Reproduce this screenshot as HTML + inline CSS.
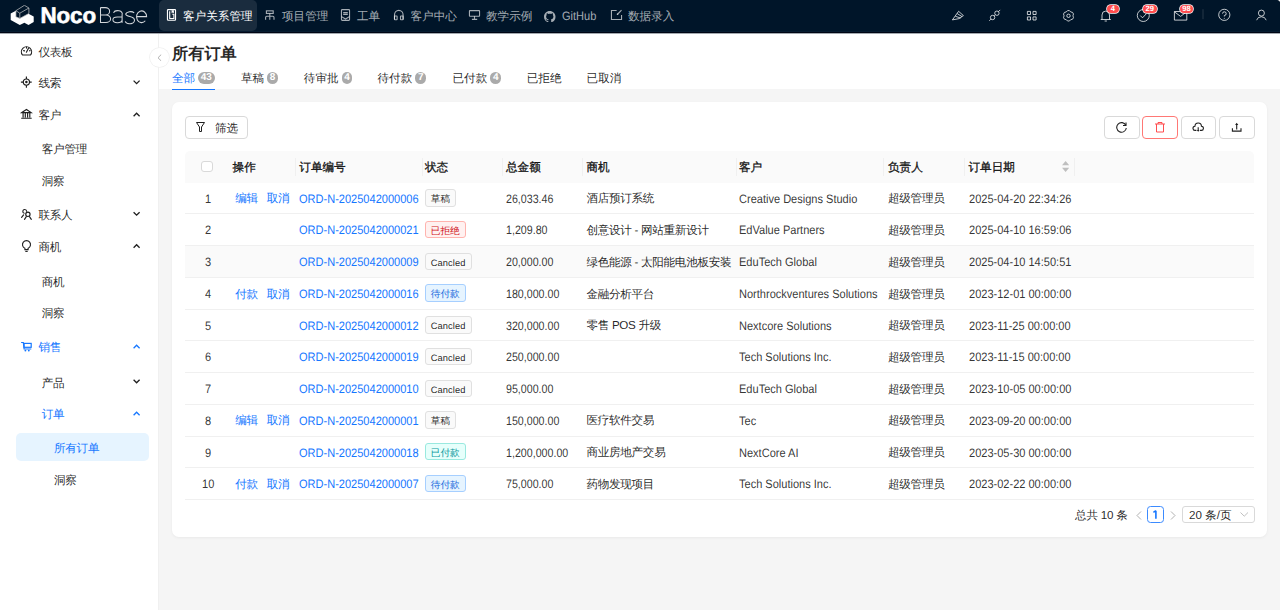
<!DOCTYPE html>
<html><head><meta charset="utf-8">
<style>
*{box-sizing:border-box;margin:0;padding:0}
html,body{width:1280px;height:610px;overflow:hidden}
body{text-rendering:geometricPrecision;font-family:"Liberation Sans",sans-serif;background:#f5f5f5;color:rgba(0,0,0,0.86);position:relative;font-size:11.6px}
.a{position:absolute;white-space:nowrap}
svg{display:block}
#hdr{position:absolute;left:0;top:0;width:1280px;height:33px;background:#001529}
.nav{position:absolute;top:0;height:33px;color:rgba(255,255,255,0.65);font-size:11.6px;line-height:33px}
.nav svg{position:absolute;top:11px}
#side{position:absolute;left:0;top:33px;width:159px;height:577px;background:#fff;border-right:1px solid #f0f0f0}
.mi{position:absolute;left:0;width:159px;height:20px;line-height:20px;font-size:11.6px;letter-spacing:-0.3px}
.mi svg.ic{position:absolute;left:21px;top:4px}
.mi .chev{position:absolute;left:133px;top:7px}
#phead{position:absolute;left:159px;top:33px;width:1121px;height:55.9px;background:#fff}
#card{position:absolute;left:172px;top:102.4px;width:1095px;height:434.5px;background:#fff;border-radius:7px;box-shadow:0 1px 3px rgba(0,0,0,0.05)}
.btn{position:absolute;top:116px;height:22.5px;width:35.5px;border:1px solid #d9d9d9;border-radius:4px;background:#fff}
.btn svg{position:absolute;left:11px;top:5px}
#thead{position:absolute;left:185px;top:151px;width:1069px;height:32px;background:#fafafa;border-radius:5px 5px 0 0}
.th{position:absolute;top:152px;height:32px;line-height:32px;font-weight:normal;-webkit-text-stroke:0.35px rgba(0,0,0,0.88);font-size:11.6px}
.dv{position:absolute;top:157.5px;width:1px;height:18px;background:#f0f0f0}
.row{position:absolute;left:185px;width:1069px;height:31.73px;border-bottom:1px solid #f0f0f0}
.td{position:absolute;height:31.73px;line-height:31.73px;font-size:11.6px;margin-top:0.7px;letter-spacing:-0.3px}
.lt{color:rgba(0,0,0,0.8);font-size:12.2px;transform:scaleX(0.905);transform-origin:0 0;margin-top:1px;letter-spacing:0}
.num{transform:scaleX(0.875)}
.lnk,.lnk.lt{color:#1677ff}
.tag{position:absolute;left:424.7px;height:17.4px;line-height:19px;font-size:9.7px;padding:0 5px;border:1px solid #e0e0e0;background:#fafafa;border-radius:3px;color:rgba(0,0,0,0.88)}
.t-red{background:#fff1f0;border-color:#ffb3ae;color:#cf1322}
.t-blue{background:#e6f4ff;border-color:#a6cfff;color:#1668dc}
.t-cyan{background:#e6fffb;border-color:#99e9df;color:#08979c}
.tab{position:absolute;top:70.1px;height:17px;line-height:17px;font-size:11.6px}
.bdg{display:inline-block;vertical-align:top;margin-top:2.4px;margin-left:3px;height:11.5px;min-width:10.8px;border-radius:6px;background:#aaa;color:#fff;font-size:10px;font-weight:bold;line-height:12px;text-align:center;padding:0 2.6px}
.nbdg{position:absolute;top:4.9px;height:8.5px;line-height:8.8px;font-size:7.6px;font-weight:bold;color:#fff;background:#ff4d4f;border-radius:4.5px;text-align:center;box-shadow:0 0 0 0.8px #fff}
</style></head>
<body>
<!-- HEADER -->
<div id="hdr">
  <svg class="a" style="left:10px;top:5px" width="25" height="21" viewBox="10 5 25 21">
    <path d="M10.7 13.5 L15.9 10.7 L15.9 16.8 L19.8 18.4 L28.5 13.8 L33.7 16.5 L33.7 22 L28.5 25 L24.4 22.8 L19.8 25 L10.7 20 Z" fill="#fff"/>
    <path d="M15.9 10.7 L24.4 5.3 L28.9 8 L19.8 13.2 Z M15.9 10.7 L15.9 16.8 L19.8 18.4 L19.8 13.2 M19.8 18.4 L28.9 13.5 L28.9 8" fill="none" stroke="#ccc" stroke-width="0.7"/>
  </svg>
  <div class="a" style="left:40.4px;top:4.3px;font-size:22.4px;line-height:24px;color:#fff;font-weight:bold;letter-spacing:-0.1px;-webkit-text-stroke:0.6px #fff">Noco</div>
  <svg class="a" style="left:95px;top:4px" width="56" height="23" viewBox="95 4 56 23"><g fill="none" stroke="#d2d6da" stroke-width="1.05"><path d="M100.5 7.6 V22.4 H106 A4.6 3.7 0 0 0 106 15 H100.5 M100.5 7.6 H105.4 A4.2 3.7 0 0 1 105.4 15"/><path d="M113.5 12.8 A4.5 3 0 0 1 122.1 14.6 V22.7 M122.1 17 H117.4 A4.5 2.85 0 0 0 117.4 22.7 A4.6 3 0 0 0 122.1 20.3"/><path d="M134.2 12.9 A4.7 2.9 0 0 0 125.7 14 C125.7 17.1 134.3 16 134.3 19.5 A4.6 3.2 0 0 1 125.2 21.4"/><path d="M136.5 16.6 H146.6 A5.05 5.85 0 1 0 145.3 20.7"/></g></svg>
  <div class="a" style="left:159px;top:0;width:98px;height:31.3px;background:rgba(255,255,255,0.1);border-radius:5px"></div>
  <div class="nav" style="left:167px;width:90px;color:#fff">
    <span class="a" style="left:16px">客户关系管理</span>
  </div>
  <div class="nav" style="left:265px;width:70px">
    <span class="a" style="left:17px">项目管理</span>
  </div>
  <div class="nav" style="left:341px;width:45px">
    <span class="a" style="left:16px">工单</span>
  </div>
  <div class="nav" style="left:393px;width:70px">
    <span class="a" style="left:17.5px">客户中心</span>
  </div>
  <div class="nav" style="left:469px;width:70px">
    <span class="a" style="left:17px">教学示例</span>
  </div>
  <div class="nav" style="left:544px;width:60px">
    <svg width="11.5" height="11.5" viewBox="0 0 16 16" style="left:0;top:10.5px"><path fill="currentColor" d="M8 0C3.58 0 0 3.58 0 8c0 3.54 2.29 6.53 5.47 7.59.4.07.55-.17.55-.38 0-.19-.01-.82-.01-1.49-2.01.37-2.53-.49-2.69-.94-.09-.23-.48-.94-.82-1.13-.28-.15-.68-.52-.01-.53.63-.01 1.08.58 1.23.82.72 1.21 1.87.87 2.33.66.07-.52.28-.87.51-1.07-1.78-.2-3.640-.89-3.64-3.95 0-.87.31-1.59.82-2.15-.08-.2-.36-1.02.08-2.12 0 0 .67-.21 2.2.82.64-.18 1.32-.27 2-.27.68 0 1.36.09 2 .27 1.53-1.04 2.2-.82 2.2-.82.44 1.1.16 1.92.08 2.12.51.56.82 1.27.82 2.15 0 3.07-1.87 3.75-3.65 3.95.29.25.54.73.54 1.48 0 1.07-.01 1.93-.01 2.2 0 .21.15.46.55.38A8.013 8.013 0 0016 8c0-4.42-3.58-8-8-8z"/></svg>
    <span class="a lt" style="left:18px;margin-top:0;color:inherit">GitHub</span>
  </div>
  <div class="nav" style="left:611px;width:70px">
    <span class="a" style="left:17px">数据录入</span>
  </div>
  <svg class="a" style="left:160px;top:0" width="470" height="33" viewBox="160 0 470 33">
   <g fill="none" stroke="#fff" stroke-width="1.1"><rect x="167.45" y="9.65" width="8.1" height="10.55" rx="0.7"/><path d="M169.7 11.3 V18.5 H173.9 V14.3 H172.3"/></g><path d="M171.6 10.2 H173.9 V13.3 L172.75 12.5 L171.6 13.3 Z" fill="#fff"/>
   <g fill="none" stroke="rgba(255,255,255,0.65)" stroke-width="1.1">
    <rect x="266.4" y="10.85" width="6.8" height="2.6"/><path d="M269.8 13.5 V16.3 M265.6 19.8 V17.4 Q265.6 16.3 266.7 16.3 H272.9 Q274 16.3 274 17.4 V19.8 M269.8 16.3 V19.8"/>
    <rect x="341.45" y="9.65" width="8.1" height="10.7" rx="0.8"/><path d="M343.2 12.6 H347.8 M343.2 14.4 H347.8 M341.6 16.6 L345.5 19 L349.4 16.6"/>
    <path d="M394.5 19.5 V15 A4.3 4.6 0 0 1 403.1 15 V19.5"/><rect x="394.5" y="16" width="2.6" height="3.8" rx="0.5"/><rect x="400.5" y="16" width="2.6" height="3.8" rx="0.5"/>
    <rect x="469.45" y="10.65" width="10.1" height="5.6" rx="0.4"/><path d="M474.5 16.3 V19.2 M471.9 19.4 H477.2"/>
    <path d="M616.6 10.45 H611.45 V19.55 H621.55 V15"/><path d="M617.3 14.5 L621.5 10.2"/>
   </g><circle cx="617.5" cy="14.3" r="0.8" fill="rgba(255,255,255,0.65)"/>
  </svg>
  <!-- right icons -->
  <svg class="a" style="left:940px;top:0" width="340" height="33" viewBox="940 0 340 33"><g fill="none" stroke="rgba(255,255,255,0.75)" stroke-width="1" stroke-linejoin="round">
   <path d="M952.4 19.9 L958.6 11.3 L963.4 15.6 L959.2 18.6 Z M955.4 16.3 L960.6 18.0 M957.2 13.6 L962.0 16.6"/>
   <circle cx="992.6" cy="17.5" r="2.2"/><circle cx="996.9" cy="13.2" r="2.2"/><path d="M989.3 20.8 L991.0 19.1 M998.5 11.6 L1000.2 9.9 M994.2 15.9 L995.3 14.8"/>
   <rect x="1027.4" y="11.4" width="3.1" height="3.1"/><rect x="1033" y="11.4" width="3.1" height="3.1"/><rect x="1027.4" y="16.9" width="3.1" height="3.1"/><rect x="1033" y="16.9" width="3.1" height="3.1"/>
   <path d="M1067.58 10.58 L1069.42 10.58 Q1070.45 12.42 1072.56 12.39 L1073.48 13.99 Q1072.40 15.80 1073.48 17.61 L1072.56 19.21 Q1070.45 19.18 1069.42 21.02 L1067.58 21.02 Q1066.55 19.18 1064.44 19.21 L1063.52 17.61 Q1064.60 15.80 1063.52 13.99 L1064.44 12.39 Q1066.55 12.42 1067.58 10.58 Z"/><circle cx="1068.5" cy="15.8" r="1.7"/>
   <path d="M1102 19.5 V15 A3.75 3.9 0 0 1 1109.5 15 V19.5 M1100.7 19.5 H1110.8 M1104.6 21 H1106.9"/>
   <circle cx="1143.3" cy="15.5" r="6"/><path d="M1140.3 15.6 L1142.5 17.8 L1146.3 13.8"/>
   <rect x="1174.4" y="11.5" width="12.4" height="8.6"/><path d="M1174.4 11.8 L1180.6 16.4 L1186.8 11.8"/>
   <circle cx="1224.3" cy="14.85" r="5.6"/><path d="M1222.5 13.6 A1.85 1.85 0 1 1 1224.3 15.5 V16.5"/>
   <circle cx="1261.4" cy="13.1" r="3.0"/><path d="M1256.6 20.2 A5 4.8 0 0 1 1266.2 20.2"/>
  </g><circle cx="1224.3" cy="18.3" r="0.55" fill="rgba(255,255,255,0.75)"/>
  <rect x="1202.5" y="9.2" width="1" height="10" fill="rgba(255,255,255,0.15)"/></svg>
  <div class="nbdg" style="left:1107px;width:11.6px">4</div>
  <div class="nbdg" style="left:1142.8px;width:13.8px">29</div>
  <div class="nbdg" style="left:1179.6px;width:13.8px">98</div>
</div>
<!-- SIDEBAR -->
<div id="side"></div>
<div class="a" style="left:15.6px;top:433.2px;width:133.4px;height:28px;background:#e6f4ff;border-radius:5px"></div>
<div class="mi" style="top:43.00px"><span class="a" style="left:38.5px">仪表板</span></div>
<div class="mi" style="top:74.40px"><span class="a" style="left:38.5px">线索</span></div>
<div class="mi" style="top:106.00px"><span class="a" style="left:38.5px">客户</span></div>
<div class="mi" style="top:140.30px"><span class="a" style="left:41.8px">客户管理</span></div>
<div class="mi" style="top:172.20px"><span class="a" style="left:41.8px">洞察</span></div>
<div class="mi" style="top:206.00px"><span class="a" style="left:38.5px">联系人</span></div>
<div class="mi" style="top:237.50px"><span class="a" style="left:38.5px">商机</span></div>
<div class="mi" style="top:273.00px"><span class="a" style="left:41.8px">商机</span></div>
<div class="mi" style="top:304.20px"><span class="a" style="left:41.8px">洞察</span></div>
<div class="mi" style="top:338.00px;color:#1677ff"><span class="a" style="left:38.5px">销售</span></div>
<div class="mi" style="top:373.60px"><span class="a" style="left:41.8px">产品</span></div>
<div class="mi" style="top:405.00px;color:#1677ff"><span class="a" style="left:41.8px">订单</span></div>
<div class="mi" style="top:439.40px;color:#1677ff"><span class="a" style="left:54.0px">所有订单</span></div>
<div class="mi" style="top:470.70px"><span class="a" style="left:54.0px">洞察</span></div>
<svg class="a" style="left:0;top:0;pointer-events:none" width="160" height="610" viewBox="0 0 160 610"><g fill="none" stroke="#1f1f1f" stroke-width="1.15"><path d="M22.5 55 A5.1 5.1 0 1 1 30.5 55 Z"/><path d="M26.4 52.2 L28.6 48.1 M23.6 50.6 L24.5 50.9 M26.5 47.2 V48.1 M29.6 50.8 L30.1 50.6" stroke-linecap="round"/></g><g fill="none" stroke="#1f1f1f" stroke-width="1.15"><circle cx="26.4" cy="82.1" r="3.1"/><path d="M26.4 76.4 V79 M26.4 85.2 V87.8 M20.9 82.1 H23.3 M29.5 82.1 H31.7"/></g><circle cx="26.4" cy="82.1" r="1.25" fill="#1f1f1f"/><g fill="none" stroke="#1f1f1f" stroke-width="1.15"><path d="M21.8 112.6 L26.45 109.5 L31.1 112.6 Z"/><path d="M23.1 113 V117.6 M25.3 113 V117.6 M27.6 113 V117.6 M29.8 113 V117.6 M21.2 118.2 H31.7"/></g><g fill="none" stroke="#1f1f1f" stroke-width="1.15" stroke-linecap="round"><path d="M26.6 211.3 A1.9 1.9 0 1 0 24.2 213.2"/><circle cx="27.9" cy="214.3" r="2.15"/><path d="M21.6 217.4 L23.6 214.9 M24.5 219.3 L26.3 216.7 M29.5 216.7 L31.3 219.3"/></g><g fill="none" stroke="#1f1f1f" stroke-width="1.1"><path d="M24.9 249.6 V248.3 A4 4 0 1 1 28.1 248.3 V249.6 Z"/><path d="M25.3 251.4 H27.7"/></g><g fill="none" stroke="#1677ff" stroke-width="1.2"><path d="M21.1 342.5 H23.3 L24.1 349 H31.3"/><rect x="24.1" y="343.4" width="7.1" height="3.9"/></g><circle cx="25.4" cy="350.6" r="0.95" fill="#1677ff"/><circle cx="28.8" cy="350.6" r="0.95" fill="#1677ff"/><path d="M133.6 80.6 L136.6 83.6 L139.6 80.6" fill="none" stroke="#1f1f1f" stroke-width="1.3"/><path d="M133.6 116.2 L136.6 113.2 L139.6 116.2" fill="none" stroke="#1f1f1f" stroke-width="1.3"/><path d="M133.6 212.2 L136.6 215.2 L139.6 212.2" fill="none" stroke="#1f1f1f" stroke-width="1.3"/><path d="M133.6 247.7 L136.6 244.7 L139.6 247.7" fill="none" stroke="#1f1f1f" stroke-width="1.3"/><path d="M133.6 348.2 L136.6 345.2 L139.6 348.2" fill="none" stroke="#1677ff" stroke-width="1.3"/><path d="M133.6 379.8 L136.6 382.8 L139.6 379.8" fill="none" stroke="#1f1f1f" stroke-width="1.3"/><path d="M133.6 415.2 L136.6 412.2 L139.6 415.2" fill="none" stroke="#1677ff" stroke-width="1.3"/></svg>
<!-- PAGE HEADER -->
<div id="phead"></div>
<div class="a" style="left:172px;top:44.2px;font-size:16.2px;line-height:20px;font-weight:bold">所有订单</div>
<div class="a" style="left:149.6px;top:48px;width:19.2px;height:19.4px;border-radius:50%;background:#fff;box-shadow:0 0 0 0.8px #f0f0f0"></div>
<svg class="a" style="left:156.5px;top:53.8px" width="5" height="7.5" viewBox="0 0 5 7.5"><path d="M4.2 0.6 L1 3.75 L4.2 6.9" fill="none" stroke="#b0b0b0" stroke-width="1"/></svg>
<div class="tab" style="left:172px;color:#1677ff">全部<span class="bdg">43</span></div>
<div class="a" style="left:172.1px;top:88.6px;width:42.6px;height:1.7px;background:#1677ff"></div>
<div class="tab" style="left:241px">草稿<span class="bdg">8</span></div>
<div class="tab" style="left:303.8px">待审批<span class="bdg">4</span></div>
<div class="tab" style="left:377.5px">待付款<span class="bdg">7</span></div>
<div class="tab" style="left:452.5px">已付款<span class="bdg">4</span></div>
<div class="tab" style="left:526.7px">已拒绝</div>
<div class="tab" style="left:586.6px">已取消</div>
<!-- CARD -->
<div id="card"></div>
<div class="a" style="left:185px;top:116.3px;width:62.5px;height:22.3px;border:1px solid #d9d9d9;border-radius:4px;background:#fff"></div>
<svg class="a" style="left:196px;top:122px" width="9" height="10" viewBox="0 0 9 10" fill="none" stroke="#1f1f1f" stroke-width="1"><path d="M0.5 0.5 H8.5 L5.5 5 V9.5 H3.5 V5 Z"/></svg>
<div class="a" style="left:215px;top:117.8px;line-height:21.8px;font-size:11.6px">筛选</div>
<div class="btn" style="left:1104px"><svg width="11" height="11" viewBox="0 0 11 11" fill="none" stroke="#1f1f1f" stroke-width="1.1"><path d="M9.8 3.2 A4.8 4.8 0 1 0 10.3 6"/><path d="M10 0.5 V3.5 H7" stroke-linejoin="round"/></svg></div>
<div class="btn" style="left:1142px;border-color:#ff7875"><svg style="left:12px" width="10" height="10.5" viewBox="0 0 10 10.5" fill="none" stroke="#ff4d4f" stroke-width="1"><path d="M0 2 H10 M3 2 V0.5 H7 V2 M1.5 2 V10 H8.5 V2"/></svg></div>
<div class="btn" style="left:1180.5px"></div>
<div class="btn" style="left:1219px"></div>
<svg class="a" style="left:1185px;top:115px" width="70" height="22" viewBox="1185 115 70 22"><g fill="none" stroke="#1f1f1f" stroke-width="1.1"><path d="M1196.4 130.4 H1195.2 A2.1 2.1 0 0 1 1194.95 126.2 A3.25 3.25 0 0 1 1201.45 126.2 A2.1 2.1 0 0 1 1201.2 130.4 H1200.0"/><path d="M1198.2 127.2 V130.6"/><path d="M1232.4 128.2 V131.1 H1241.0 V128.2 M1236.7 124.2 V129.4"/></g><path d="M1196.8 129.9 L1198.2 131.7 L1199.6 129.9 Z M1235.1 125.1 L1236.7 122.8 L1238.3 125.1 Z" fill="#1f1f1f"/></svg>
<div id="thead"></div>
<div class="a" style="left:201.3px;top:161.2px;width:11.4px;height:10.6px;border:1px solid #d9d9d9;border-radius:3px;background:#fff"></div>
<div class="th" style="left:232.6px">操作</div>
<div class="th" style="left:299.3px">订单编号</div>
<div class="th" style="left:425px">状态</div>
<div class="th" style="left:506px">总金额</div>
<div class="th" style="left:586.4px">商机</div>
<div class="th" style="left:739px">客户</div>
<div class="th" style="left:888px">负责人</div>
<div class="th" style="left:968.5px">订单日期</div>
<div class="dv" style="left:295.3px"></div>
<div class="dv" style="left:421.6px"></div>
<div class="dv" style="left:502.3px"></div>
<div class="dv" style="left:582px"></div>
<div class="dv" style="left:735.6px"></div>
<div class="dv" style="left:883.3px"></div>
<div class="dv" style="left:964.4px"></div>
<div class="dv" style="left:1073.5px"></div>
<svg class="a" style="left:1062.2px;top:161.2px" width="7.2" height="11" viewBox="0 0 7.2 11"><path d="M3.6 0 L7.2 4.3 H0 Z M0 6.7 H7.2 L3.6 11 Z" fill="#bfbfbf"/></svg>
<div class="row" style="top:182.70px"></div>
<div class="td lt" style="left:205px;top:182.70px">1</div>
<div class="td lnk" style="left:235.2px;top:182.70px">编辑</div>
<div class="td lnk" style="left:266.7px;top:182.70px">取消</div>
<div class="td lnk lt" style="left:299.2px;top:182.70px">ORD-N-2025042000006</div>
<div class="tag " style="top:189.20px">草稿</div>
<div class="td lt num" style="left:505.9px;top:182.70px">26,033.46</div>
<div class="td " style="left:586.4px;top:182.70px">酒店预订系统</div>
<div class="td lt" style="left:739px;top:182.70px">Creative Designs Studio</div>
<div class="td " style="left:888px;top:182.70px">超级管理员</div>
<div class="td lt" style="left:968.5px;top:182.70px">2025-04-20 22:34:26</div>
<div class="row" style="top:214.43px"></div>
<div class="td lt" style="left:205px;top:214.43px">2</div>
<div class="td lnk lt" style="left:299.2px;top:214.43px">ORD-N-2025042000021</div>
<div class="tag t-red" style="top:220.93px">已拒绝</div>
<div class="td lt num" style="left:505.9px;top:214.43px">1,209.80</div>
<div class="td " style="left:586.4px;top:214.43px">创意设计 - 网站重新设计</div>
<div class="td lt" style="left:739px;top:214.43px">EdValue Partners</div>
<div class="td " style="left:888px;top:214.43px">超级管理员</div>
<div class="td lt" style="left:968.5px;top:214.43px">2025-04-10 16:59:06</div>
<div class="row" style="top:246.16px;background:#fafafa"></div>
<div class="td lt" style="left:205px;top:246.16px">3</div>
<div class="td lnk lt" style="left:299.2px;top:246.16px">ORD-N-2025042000009</div>
<div class="tag " style="top:252.66px;font-size:9.3px;letter-spacing:0.1px">Cancled</div>
<div class="td lt num" style="left:505.9px;top:246.16px">20,000.00</div>
<div class="td " style="left:586.4px;top:246.16px">绿色能源 - 太阳能电池板安装</div>
<div class="td lt" style="left:739px;top:246.16px">EduTech Global</div>
<div class="td " style="left:888px;top:246.16px">超级管理员</div>
<div class="td lt" style="left:968.5px;top:246.16px">2025-04-10 14:50:51</div>
<div class="row" style="top:277.89px"></div>
<div class="td lt" style="left:205px;top:277.89px">4</div>
<div class="td lnk" style="left:235.2px;top:277.89px">付款</div>
<div class="td lnk" style="left:266.7px;top:277.89px">取消</div>
<div class="td lnk lt" style="left:299.2px;top:277.89px">ORD-N-2025042000016</div>
<div class="tag t-blue" style="top:284.39px">待付款</div>
<div class="td lt num" style="left:505.9px;top:277.89px">180,000.00</div>
<div class="td " style="left:586.4px;top:277.89px">金融分析平台</div>
<div class="td lt" style="left:739px;top:277.89px">Northrockventures Solutions</div>
<div class="td " style="left:888px;top:277.89px">超级管理员</div>
<div class="td lt" style="left:968.5px;top:277.89px">2023-12-01 00:00:00</div>
<div class="row" style="top:309.62px"></div>
<div class="td lt" style="left:205px;top:309.62px">5</div>
<div class="td lnk lt" style="left:299.2px;top:309.62px">ORD-N-2025042000012</div>
<div class="tag " style="top:316.12px;font-size:9.3px;letter-spacing:0.1px">Cancled</div>
<div class="td lt num" style="left:505.9px;top:309.62px">320,000.00</div>
<div class="td " style="left:586.4px;top:309.62px">零售 POS 升级</div>
<div class="td lt" style="left:739px;top:309.62px">Nextcore Solutions</div>
<div class="td " style="left:888px;top:309.62px">超级管理员</div>
<div class="td lt" style="left:968.5px;top:309.62px">2023-11-25 00:00:00</div>
<div class="row" style="top:341.35px"></div>
<div class="td lt" style="left:205px;top:341.35px">6</div>
<div class="td lnk lt" style="left:299.2px;top:341.35px">ORD-N-2025042000019</div>
<div class="tag " style="top:347.85px;font-size:9.3px;letter-spacing:0.1px">Cancled</div>
<div class="td lt num" style="left:505.9px;top:341.35px">250,000.00</div>
<div class="td lt" style="left:739px;top:341.35px">Tech Solutions Inc.</div>
<div class="td " style="left:888px;top:341.35px">超级管理员</div>
<div class="td lt" style="left:968.5px;top:341.35px">2023-11-15 00:00:00</div>
<div class="row" style="top:373.08px"></div>
<div class="td lt" style="left:205px;top:373.08px">7</div>
<div class="td lnk lt" style="left:299.2px;top:373.08px">ORD-N-2025042000010</div>
<div class="tag " style="top:379.58px;font-size:9.3px;letter-spacing:0.1px">Cancled</div>
<div class="td lt num" style="left:505.9px;top:373.08px">95,000.00</div>
<div class="td lt" style="left:739px;top:373.08px">EduTech Global</div>
<div class="td " style="left:888px;top:373.08px">超级管理员</div>
<div class="td lt" style="left:968.5px;top:373.08px">2023-10-05 00:00:00</div>
<div class="row" style="top:404.81px"></div>
<div class="td lt" style="left:205px;top:404.81px">8</div>
<div class="td lnk" style="left:235.2px;top:404.81px">编辑</div>
<div class="td lnk" style="left:266.7px;top:404.81px">取消</div>
<div class="td lnk lt" style="left:299.2px;top:404.81px">ORD-N-2025042000001</div>
<div class="tag " style="top:411.31px">草稿</div>
<div class="td lt num" style="left:505.9px;top:404.81px">150,000.00</div>
<div class="td " style="left:586.4px;top:404.81px">医疗软件交易</div>
<div class="td lt" style="left:739px;top:404.81px">Tec</div>
<div class="td " style="left:888px;top:404.81px">超级管理员</div>
<div class="td lt" style="left:968.5px;top:404.81px">2023-09-20 00:00:00</div>
<div class="row" style="top:436.54px"></div>
<div class="td lt" style="left:205px;top:436.54px">9</div>
<div class="td lnk lt" style="left:299.2px;top:436.54px">ORD-N-2025042000018</div>
<div class="tag t-cyan" style="top:443.04px">已付款</div>
<div class="td lt num" style="left:505.9px;top:436.54px">1,200,000.00</div>
<div class="td " style="left:586.4px;top:436.54px">商业房地产交易</div>
<div class="td lt" style="left:739px;top:436.54px">NextCore AI</div>
<div class="td " style="left:888px;top:436.54px">超级管理员</div>
<div class="td lt" style="left:968.5px;top:436.54px">2023-05-30 00:00:00</div>
<div class="row" style="top:468.27px"></div>
<div class="td lt" style="left:201.5px;top:468.27px">10</div>
<div class="td lnk" style="left:235.2px;top:468.27px">付款</div>
<div class="td lnk" style="left:266.7px;top:468.27px">取消</div>
<div class="td lnk lt" style="left:299.2px;top:468.27px">ORD-N-2025042000007</div>
<div class="tag t-blue" style="top:474.77px">待付款</div>
<div class="td lt num" style="left:505.9px;top:468.27px">75,000.00</div>
<div class="td " style="left:586.4px;top:468.27px">药物发现项目</div>
<div class="td lt" style="left:739px;top:468.27px">Tech Solutions Inc.</div>
<div class="td " style="left:888px;top:468.27px">超级管理员</div>
<div class="td lt" style="left:968.5px;top:468.27px">2023-02-22 00:00:00</div>
<div class="a" style="left:0;top:31px;width:1280px;height:1px;background:#061b30"></div>
<div class="a" style="left:0;top:32px;width:1280px;height:1px;background:#000514"></div>
<div class="a" style="left:0;top:33px;width:1280px;height:1px;background:#a3a9af"></div>
<svg class="a" style="left:1276px;top:0" width="4" height="4" viewBox="0 0 4 4"><path d="M1.5 0 H4 V3.5 A3 3 0 0 0 1.5 0 Z" fill="#fff"/></svg>
<!-- PAGINATION -->
<div class="a" style="left:1075px;top:506.5px;line-height:17px;font-size:11.6px;letter-spacing:-0.2px">总共 10 条</div>
<svg class="a" style="left:1135.5px;top:510.5px" width="6" height="9" viewBox="0 0 6 9"><path d="M5 0.5 L1 4.5 L5 8.5" fill="none" stroke="#a8a8a8" stroke-width="0.9"/></svg>
<div class="a" style="left:1147px;top:506.2px;width:16.6px;height:17.2px;border:1px solid #3c8bff;border-radius:3.5px;color:#1677ff;text-align:center;line-height:16.5px;font-size:11.6px"></div>
<svg class="a" style="left:1150px;top:508px" width="10" height="13" viewBox="1150 508 10 13"><path d="M1155.9 510.7 V518.7 M1153.4 512.3 L1155.9 510.7" fill="none" stroke="#1677ff" stroke-width="1.6" stroke-linejoin="round"/></svg>
<svg class="a" style="left:1170px;top:510.5px" width="6" height="9" viewBox="0 0 6 9"><path d="M1 0.5 L5 4.5 L1 8.5" fill="none" stroke="#a8a8a8" stroke-width="0.9"/></svg>
<div class="a" style="left:1182.4px;top:506.2px;width:72.2px;height:17.2px;border:1px solid #d9d9d9;border-radius:3px"></div>
<div class="a" style="left:1189px;top:507.2px;line-height:17.2px;font-size:11.6px">20 条/页</div>
<svg class="a" style="left:1239.5px;top:512px" width="8.5" height="5" viewBox="0 0 8.5 5"><path d="M0.5 0.5 L4.25 4.2 L8 0.5" fill="none" stroke="#bfbfbf" stroke-width="1"/></svg>
</body></html>
